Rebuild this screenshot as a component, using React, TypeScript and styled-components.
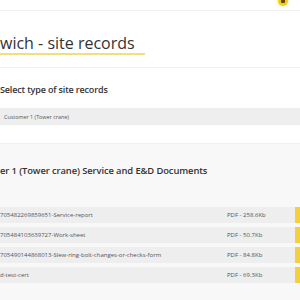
import styled, { createGlobalStyle } from "styled-components";

const GlobalStyle = createGlobalStyle`
  html, body {
    margin: 0;
    padding: 0;
    background: #fff;
    overflow: hidden;
  }
  body {
    font-family: "Open Sans", "Noto Sans", sans-serif;
    color: #3a3a3a;
  }
`;

const docs = [
  { name: "705482269859651-Service-report", size: "PDF - 258.6Kb" },
  { name: "705484103639727-Work-sheet", size: "PDF - 50.7Kb" },
  { name: "705490144868013-Slew-ring-bolt-changes-or-checks-form", size: "PDF - 84.8Kb" },
  { name: "d-test-cert", size: "PDF - 69.3Kb" },
];

export default function App() {
  return (
    <>
      <GlobalStyle />
      <Page>
        <TopBar>
          <Avatar />
        </TopBar>

        <TitleSection>
          <Title>wich - site records</Title>
        </TitleSection>

        <SelectSection>
          <SubHeading>Select type of site records</SubHeading>
          <Choice>Customer 1 (Tower crane)</Choice>
        </SelectSection>

        <DocsSection>
          <DocsHeading>er 1 (Tower crane) Service and E&amp;D Documents</DocsHeading>
          <DocList>
            {docs.map((d) => (
              <DocRow key={d.name}>
                <DocName>{d.name}</DocName>
                <DocSize>{d.size}</DocSize>
                <Download aria-label="Download" />
              </DocRow>
            ))}
          </DocList>
        </DocsSection>
      </Page>
    </>
  );
}

const Page = styled.div`
  width: 300px;
  height: 300px;
  overflow: hidden;
  display: flex;
  flex-direction: column;
`;

const TopBar = styled.header`
  height: 10px;
  display: flex;
  justify-content: flex-end;
  padding-right: 12px;
  border-bottom: 1px solid #f0f0f0;
`;

const Avatar = styled.div`
  width: 10px;
  height: 10px;
  margin-top: -4px;
  border-radius: 50%;
  background: #f2cf1f;
  box-shadow: 0 0 3px rgba(240, 200, 30, 0.6);
  display: flex;
  align-items: center;
  justify-content: center;
  &::after {
    content: "";
    width: 4px;
    height: 4px;
    border-radius: 1px;
    background: #5c4a10;
  }
`;

const TitleSection = styled.section`
  padding: 21px 0 12px;
  border-bottom: 1px solid #f0f0f0;
`;

const Title = styled.h1`
  display: inline-block;
  margin: 0;
  padding: 0 10px 0 0;
  font-size: 16px;
  line-height: 20px;
  font-weight: 500;
  color: #333;
  border-bottom: 2px solid #efe07a;
`;

const SelectSection = styled.section`
  padding: 15px 0 18px;
`;

const SubHeading = styled.h2`
  margin: 0 0 11px;
  font-size: 9px;
  line-height: 14px;
  font-weight: 600;
  letter-spacing: -0.15px;
  color: #333;
`;

const Choice = styled.div`
  height: 17px;
  display: flex;
  align-items: center;
  padding-left: 4px;
  background: #eeeeee;
  font-size: 5.4px;
  color: #555;
`;

const DocsSection = styled.section`
  flex: 1;
  background: #f8f8f8;
  border-top: 1px solid #f0f0f0;
  padding-top: 19px;
`;

const DocsHeading = styled.h2`
  margin: 0 0 29px;
  font-size: 9.4px;
  line-height: 15px;
  font-weight: 600;
  letter-spacing: -0.1px;
  color: #333;
  white-space: nowrap;
`;

const DocList = styled.div`
  display: flex;
  flex-direction: column;
  gap: 4px;
`;

const DocRow = styled.div`
  display: grid;
  grid-template-columns: 227px 68px 16px;
  height: 16px;
  align-items: center;
  background: #eeeeee;
  font-size: 6px;
  color: #555;
`;

const DocName = styled.span`
  white-space: nowrap;
  overflow: hidden;
`;

const DocSize = styled.span`
  white-space: nowrap;
`;

const Download = styled.button`
  height: 100%;
  border: 0;
  padding: 0;
  background: #f6cf3c;
`;
